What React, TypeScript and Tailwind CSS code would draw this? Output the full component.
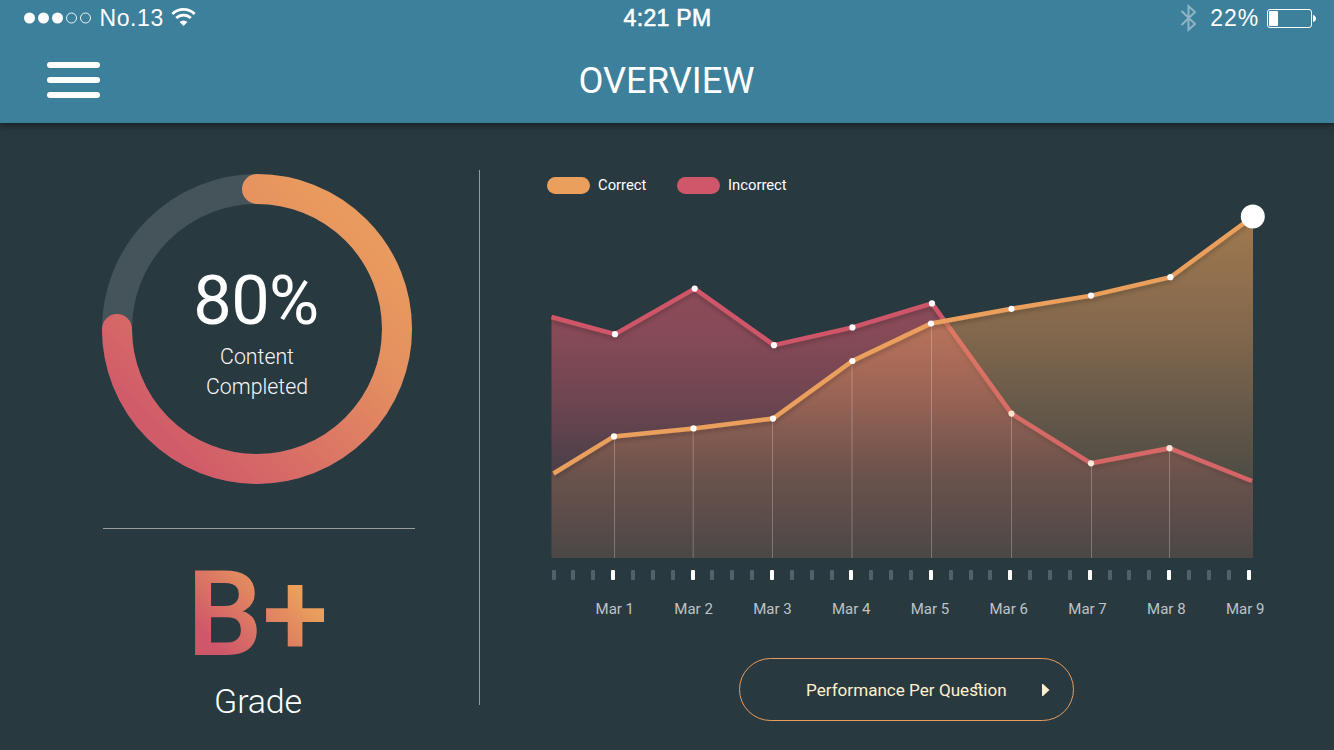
import React from "react";

type Point = [number, number];

const incorrect: Point[] = [
  [551.5, 317], [615, 334.2], [694.7, 288.6], [774, 345.2], [852.4, 327.4],
  [932, 303.4], [1011.5, 413.6], [1091, 463.3], [1169.5, 448.2], [1252, 481],
];
const correct: Point[] = [
  [553.5, 473.5], [614, 436.4], [693.5, 428.4], [773, 418.6], [852.4, 361],
  [931, 323.5], [1011.5, 308.8], [1091, 295.6], [1170.4, 277.2], [1253, 216.5],
];
const guides: Point[] = [
  [614.5, 436], [693.2, 428], [772.5, 418], [852, 361],
  [931.5, 323], [1011.5, 413], [1091.5, 463], [1169.5, 448],
];
const days = ["Mar 1", "Mar 2", "Mar 3", "Mar 4", "Mar 5", "Mar 6", "Mar 7", "Mar 8", "Mar 9"];

const toPoints = (list: Point[]) => list.map((p) => p.join(",")).join(" ");
const toArea = (list: Point[]) =>
  `551.5,558 551.5,${list[0][1]} ${toPoints(list.slice(1, -1))} 1253,${list[list.length - 1][1]} 1253,558`;

function StatusBar() {
  return (
    <div className="grid h-[35px] grid-cols-3 items-center font-['Liberation_Sans',Arial,sans-serif] text-[23px] leading-9">
      <div className="flex items-center pl-6">
        <svg className="-mt-px" width="68" height="12" viewBox="0 0 68 12">
          <g fill="#fff">
            <circle cx="5.5" cy="6" r="5.5" />
            <circle cx="19.5" cy="6" r="5.5" />
            <circle cx="33.5" cy="6" r="5.5" />
          </g>
          <g fill="none" stroke="#fff" strokeWidth="0.9">
            <circle cx="47.5" cy="6" r="5" />
            <circle cx="61.5" cy="6" r="5" />
          </g>
        </svg>
        <span className="ml-[7.5px] w-[65px] whitespace-nowrap tracking-[0.6px]">No.13</span>
        <svg className="-mt-0.5 ml-[6.5px]" width="25" height="20" viewBox="0 0 25 20" fill="none" stroke="#fff">
          <path d="M1.4 6.9 A16 16 0 0 1 23.6 6.9" strokeWidth="2.8" />
          <path d="M5.2 11 A10.5 10.5 0 0 1 19.8 11" strokeWidth="2.8" />
          <path d="M12.5 19 L8.6 15.1 A5.6 5.6 0 0 1 16.4 15.1 Z" fill="#fff" stroke="none" />
        </svg>
      </div>
      <div className="pl-px text-center tracking-[0.3px] [-webkit-text-stroke:0.6px_white]">4:21 PM</div>
      <div className="flex items-center justify-end pr-[18px]">
        <svg width="17" height="28" viewBox="0 0 17 28" fill="none" stroke="#fff" strokeOpacity="0.42" strokeWidth="2">
          <path d="M1.5 7 L15 20 L8.5 25.8 V2.2 L15 8 L1.5 21" />
        </svg>
        <span className="ml-[13px] mr-2 whitespace-nowrap tracking-[0.9px]">22%</span>
        <svg width="49" height="19" viewBox="0 0 49 19">
          <rect x="0.5" y="0.5" width="44" height="18" rx="2.5" fill="none" stroke="#fff" />
          <rect x="2" y="2" width="9" height="15" rx="1" fill="#fff" />
          <path d="M46 6 Q49 7 49 9.5 Q49 12 46 13 Z" fill="#fff" />
        </svg>
      </div>
    </div>
  );
}

function Header() {
  return (
    <header className="relative h-[123px] bg-[#3d809b] shadow-[0_2px_7px_rgba(0,0,0,0.5)]">
      <StatusBar />
      <div className="grid h-[90px] grid-cols-3 items-center">
        <button className="ml-[47px] flex w-[53px] flex-col gap-[9px]" aria-label="Menu">
          <span className="h-1.5 rounded-full bg-white" />
          <span className="h-1.5 rounded-full bg-white" />
          <span className="h-1.5 rounded-full bg-white" />
        </button>
        <h1 className="pt-px pr-px text-center text-[36.3px] leading-[40px]">OVERVIEW</h1>
      </div>
    </header>
  );
}

function Progress() {
  return (
    <div className="grid h-[310px] w-[310px]">
      <svg className="col-start-1 row-start-1" width="310" height="310" viewBox="0 0 310 310" fill="none" strokeWidth="30">
        <defs>
          <linearGradient id="ring" gradientUnits="userSpaceOnUse" x1="254" y1="56" x2="56" y2="254">
            <stop offset="0" stopColor="#e99a5e" />
            <stop offset="0.28" stopColor="#e48f60" />
            <stop offset="0.85" stopColor="#d56668" />
            <stop offset="1" stopColor="#d15c69" />
          </linearGradient>
        </defs>
        <circle cx="155" cy="155" r="140" stroke="#45535a" />
        <path d="M155 15 A140 140 0 1 1 15 155" stroke="url(#ring)" strokeLinecap="round" />
      </svg>
      <div className="col-start-1 row-start-1 flex flex-col items-center pt-[87px] text-center">
        <div className="pr-0.5 text-[68.5px] leading-20 tracking-[-0.6px]">80%</div>
        <div className="mt-px text-[21.3px] font-light leading-[30px] text-[#f6f7f7]">
          Content
          <br />
          Completed
        </div>
      </div>
    </div>
  );
}

function Chart() {
  return (
    <svg className="block" width="742" height="365" viewBox="540 198 742 365" fill="none">
      <defs>
        <linearGradient id="pinkFill" gradientUnits="userSpaceOnUse" x1="0" y1="288" x2="0" y2="558">
          <stop offset="0" stopColor="#cf5769" stopOpacity="0.6" />
          <stop offset="0.16" stopColor="#cf5769" stopOpacity="0.57" />
          <stop offset="0.41" stopColor="#cf5769" stopOpacity="0.42" />
          <stop offset="0.64" stopColor="#cf5769" stopOpacity="0.23" />
          <stop offset="1" stopColor="#cf5769" stopOpacity="0.06" />
        </linearGradient>
        <linearGradient id="orangeFill" gradientUnits="userSpaceOnUse" x1="0" y1="217" x2="0" y2="558">
          <stop offset="0" stopColor="#e9a058" stopOpacity="0.62" />
          <stop offset="0.33" stopColor="#e99d5c" stopOpacity="0.47" />
          <stop offset="0.62" stopColor="#e99d5c" stopOpacity="0.28" />
          <stop offset="0.76" stopColor="#e99d5c" stopOpacity="0.2" />
          <stop offset="1" stopColor="#e99d5c" stopOpacity="0.13" />
        </linearGradient>
        <filter id="lineShadow" x="-5%" y="-10%" width="110%" height="125%">
          <feDropShadow dx="0" dy="3" stdDeviation="2" floodColor="#000" floodOpacity="0.2" />
        </filter>
      </defs>
      <polygon points={toArea(incorrect)} fill="url(#pinkFill)" />
      <polyline points={toPoints(incorrect)} stroke="#cf5769" strokeWidth="4.5" filter="url(#lineShadow)" />
      {incorrect.slice(1, -1).map(([x, y]) => (
        <circle key={x} cx={x} cy={y} r="3.1" fill="#fff" />
      ))}
      <polygon points={toArea(correct)} fill="url(#orangeFill)" />
      {guides.map(([x, y]) => (
        <path key={x} d={`M${x} ${y + 2}V558`} stroke="#fff" strokeOpacity="0.25" />
      ))}
      <polyline points={toPoints(correct)} stroke="#eaa05c" strokeWidth="4.5" filter="url(#lineShadow)" />
      {correct.slice(1, -1).map(([x, y]) => (
        <circle key={x} cx={x} cy={y} r="3.1" fill="#fff" />
      ))}
      <circle cx="1252.8" cy="216.5" r="12" fill="#fff" />
    </svg>
  );
}

export default function App() {
  return (
    <div className="flex h-[750px] w-[1334px] flex-col overflow-hidden bg-[#293940] font-[Roboto,sans-serif] text-white">
      <Header />
      <main className="flex flex-1">
        <section className="mr-[103px] flex w-[376px] shrink-0 flex-col pl-[102px] pt-[51px]">
          <Progress />
          <div className="ml-px mt-11 h-px w-[312px] shrink-0 bg-[#98a09f]" />
          <div className="flex w-[312px] flex-col items-center">
            <div className="mr-px mt-[31px] bg-[linear-gradient(45deg,#cf5769_21%,#ea9f5c_75%)] bg-clip-text text-[119px] font-semibold leading-[110px] text-transparent">
              B+
            </div>
            <div className="mt-[11px] text-[34px] font-light leading-[40px] tracking-[-0.2px]">Grade</div>
          </div>
        </section>
        <div className="mt-[47px] h-[535px] w-px shrink-0 bg-[#939c9f]" />
        <section className="flex flex-1 flex-col pl-[60px] pt-[53px]">
          <div className="ml-[7px] flex h-[18px] items-center text-[14.8px]">
            <span className="h-[17px] w-[43px] rounded-full bg-[#eaa05c]" />
            <span className="ml-2 w-[79px] pt-px">Correct</span>
            <span className="h-[17px] w-[43px] rounded-full bg-[#cf5769]" />
            <span className="ml-2 pt-px">Incorrect</span>
          </div>
          <div className="mt-1">
            <Chart />
          </div>
          <div className="ml-[11.5px] mt-[7px] flex h-2.5 w-[699.5px] justify-between">
            {Array.from({ length: 36 }, (_, i) => (
              <span key={i} className={i % 4 === 3 ? "w-1 rounded-[1px] bg-white" : "w-1 rounded-[1px] bg-[#53616a]"} />
            ))}
          </div>
          <div className="ml-[35.4px] mt-5 flex h-[18px] text-[15px] leading-[19px] text-[#bfc3c5]">
            {days.map((day) => (
              <span key={day} className="w-[78.8px] text-center">{day}</span>
            ))}
          </div>
          <button className="ml-[199px] mt-10 flex h-[63px] w-[335px] items-center rounded-full border border-[#e99d5c] pl-[66px] text-[17.1px] text-[#fff0cf]">
            <span className="w-[202px] whitespace-nowrap pt-0.5 text-left [font-variant-ligatures:discretionary-ligatures]">Performance Per Question</span>
            <svg className="ml-[34px]" width="8" height="12" viewBox="0 0 8 12" fill="#fff0cf">
              <path d="M0 0H1L7.5 6L1 12H0Z" />
            </svg>
          </button>
        </section>
      </main>
    </div>
  );
}
